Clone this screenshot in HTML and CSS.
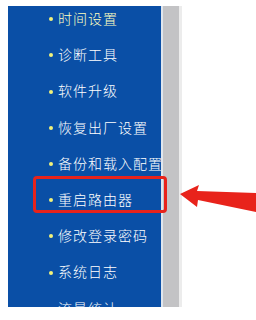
FILE: index.html
```html
<!DOCTYPE html>
<html lang="zh-CN">
<head>
    <meta charset="UTF-8">
    <title>系统工具</title>
    <link rel="stylesheet" href="styles.css">
</head>
<body>
    <div class="frame">
        <div class="menu">
            <ul class="menu-list">
                <li class="active">时间设置</li>
                <li>诊断工具</li>
                <li>软件升级</li>
                <li>恢复出厂设置</li>
                <li>备份和载入配置</li>
                <li>重启路由器</li>
                <li>修改登录密码</li>
                <li>系统日志</li>
                <li>流量统计</li>
            </ul>
        </div>
        <div class="edge"></div>
        <div class="scrollbar"></div>
        <div class="shade"></div>

        <!-- 标注 -->
        <div class="highlight"></div>
        <svg class="arrow" width="80" height="32" viewBox="0 0 80 32">
            <polygon points="0,14 19,5 17,11 76,13 76,32 18,20 17,27" fill="#e8231b"/>
        </svg>
    </div>
</body>
</html>
```

FILE: styles.css
```css
body {
    margin: 0;
    background-color: white;
    font-family: "Noto Sans CJK SC", "Noto Sans", sans-serif;
}
.frame {
    position: relative;
    display: flex;
    padding: 6px 0 0 8px;
    height: 301px;
}
.menu {
    width: 153px;
    height: 301px;
    overflow: hidden;
    background-color: #0a4fa6;
}
.menu-list {
    list-style: none;
    margin: -6px 0 0 0;
    padding: 0;
}
.menu-list li {
    height: 36.2px;
    line-height: 36px;
    padding-left: 41px;
    color: white;
    font-size: 14px;
    font-weight: 300;
    letter-spacing: 1px;
    white-space: nowrap;
}
.menu-list li::before {
    content: "";
    display: inline-block;
    width: 4px;
    height: 4px;
    border-radius: 50%;
    background-color: #f2f27a;
    margin-right: 5px;
    vertical-align: middle;
    position: relative;
    top: -1px;
}
.menu-list li.active {
    color: #ffffc0;
}
.edge {
    width: 2px;
    background-color: #dfe6ee;
}
.scrollbar {
    width: 16px;
    background-color: #c3c3c5;
}
.shade {
    width: 3px;
    background-color: #ececec;
}
.highlight {
    position: absolute;
    left: 33px;
    top: 176px;
    width: 128px;
    height: 31px;
    border: 3px solid #e8231b;
    border-radius: 4px;
}
.arrow {
    position: absolute;
    left: 180px;
    top: 180px;
}
```
